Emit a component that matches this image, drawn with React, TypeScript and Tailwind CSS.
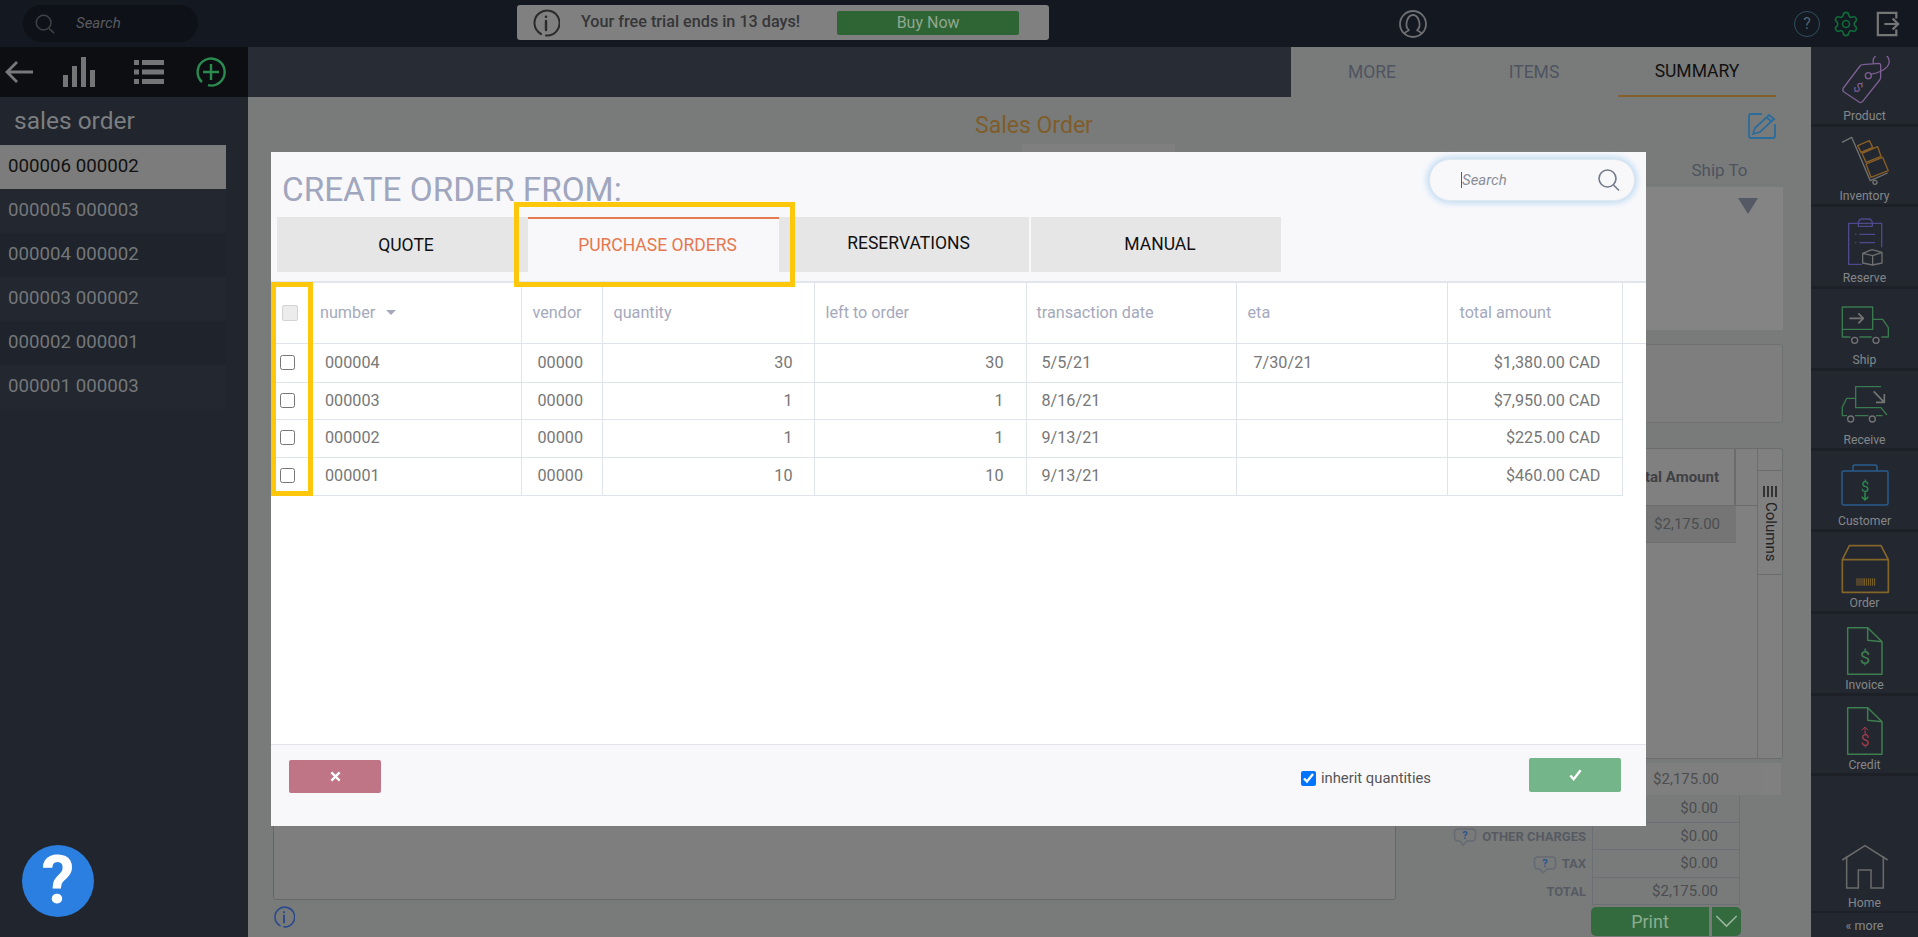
import { Settings } from 'lucide-react'

const orders = [
  { text: '000006 000002', cls: 'bg-[#7b7c7b] text-[#111111]' },
  { text: '000005 000003', cls: 'bg-[#23272f] text-[#74777a]' },
  { text: '000004 000002', cls: 'bg-[#1f232b] text-[#74777a]' },
  { text: '000003 000002', cls: 'bg-[#23272f] text-[#74777a]' },
  { text: '000002 000001', cls: 'bg-[#1f232b] text-[#74777a]' },
  { text: '000001 000003', cls: 'bg-[#23272f] text-[#74777a]' },
]

const purchaseRows = [
  { h: 'h-[39px]', number: '000004', qty: '30', left: '30', date: '5/5/21', eta: '7/30/21', total: '$1,380.00 CAD' },
  { h: 'h-[37px]', number: '000003', qty: '1', left: '1', date: '8/16/21', eta: '', total: '$7,950.00 CAD' },
  { h: 'h-[38px]', number: '000002', qty: '1', left: '1', date: '9/13/21', eta: '', total: '$225.00 CAD' },
  { h: 'h-[38px]', number: '000001', qty: '10', left: '10', date: '9/13/21', eta: '', total: '$460.00 CAD' },
]

function ProductIcon() {
  return (
    <svg viewBox="0 0 150 156" className="w-[50px] h-[52px]" fill="none" strokeWidth="4" strokeLinejoin="round">
      <path d="M10 96 L60 30 Q63 26 68 26 L116 22 Q122 22 122 28 L122 64 Q122 68 119 72 L68 136 Q63 142 57 138 L12 108 Q6 103 10 96 Z" stroke="#7d5f93" />
      <circle cx="85" cy="59" r="9" stroke="#7d5f93" />
      <path d="M90 55 Q125 50 142 32 A24 24 0 1 0 100 22" stroke="#7d5f93" />
      <text x="55" y="108" fontSize="40" fill="#7d5f93" fontFamily="Roboto" textAnchor="middle" transform="rotate(40 55 94)">$</text>
    </svg>
  )
}

function InventoryIcon() {
  return (
    <svg viewBox="0 0 150 156" className="w-[50px] h-[52px]" fill="none" strokeWidth="4" strokeLinejoin="round">
      <path d="M6 19 L35 4 L91 134 L143 111" stroke="#737373" />
      <circle cx="105" cy="139" r="6" stroke="#737373" />
      <path d="M53 29 L88 14 L98 34 L63 49 Z M66 52 L113 32 L123 61 L78 79 Z M78 84 L128 64 L145 104 L93 124 Z" stroke="#8a5f25" />
    </svg>
  )
}

function ReserveIcon() {
  return (
    <svg viewBox="0 0 150 156" className="w-[50px] h-[52px]" fill="none" strokeWidth="4" strokeLinejoin="round">
      <path d="M66 139 H26 V16 H55 Q56 3 66 3 H86 Q96 3 97 16 H125 V88" stroke="#4c4a8c" />
      <path d="M55 16 H97 V25 H55 Z" stroke="#4c4a8c" />
      <path d="M45 49 H49 M58 49 H105 M45 74 H49 M58 74 H105" stroke="#4c4a8c" />
      <path d="M68 106 L96 95 L126 103 V135 L98 141 L68 135 Z M68 106 L98 113 L126 103 M98 113 V141" stroke="#6e6e6e" />
    </svg>
  )
}

function ShipIcon() {
  return (
    <svg viewBox="0 0 150 156" className="w-[50px] h-[52px]" fill="none" strokeWidth="4" strokeLinejoin="round">
      <path d="M7 21 H98 V88 H7 Z M98 58 H128 L145 83 V111 H124 M7 88 V111 H31 M58 111 H95" stroke="#3a7a4e" />
      <circle cx="44" cy="121" r="9" stroke="#747474" />
      <circle cx="108" cy="121" r="9" stroke="#747474" />
      <path d="M28 55 H70 M55 40 L70 55 L55 70" stroke="#747474" strokeWidth="5" />
    </svg>
  )
}

function ReceiveIcon() {
  return (
    <svg viewBox="0 0 150 156" className="w-[50px] h-[52px]" fill="none" strokeWidth="4" strokeLinejoin="round">
      <path d="M123 20 H47 V83 H123 L141 105 M47 55 H20 L7 82 V107 H21 M45 107 H85 M108 107 H128" stroke="#3a7a4e" />
      <circle cx="32" cy="117" r="9" stroke="#747474" />
      <circle cx="97" cy="117" r="9" stroke="#747474" />
      <path d="M101 34 L133 67 M133 42 V67 H108" stroke="#747474" strokeWidth="5" />
    </svg>
  )
}

function CustomerIcon() {
  return (
    <svg viewBox="0 0 150 156" className="w-[50px] h-[52px]" fill="none" strokeWidth="4.5" strokeLinejoin="round">
      <rect x="6" y="30" width="138" height="102" rx="5" stroke="#2a5e8e" />
      <path d="M39 30 V18 Q39 12 45 12 H105 Q111 12 111 18 V30" stroke="#2a5e8e" />
      <text x="75" y="94" fontSize="44" fill="#2b8a4f" fontFamily="Roboto" textAnchor="middle">$</text>
      <path d="M75 96 V116 M65 107 L75 117 L85 107" stroke="#2b8a4f" />
    </svg>
  )
}

function OrderIcon() {
  return (
    <svg viewBox="0 0 150 156" className="w-[50px] h-[52px]" fill="none" strokeWidth="5" strokeLinejoin="round">
      <path d="M7 50 L28 8 H123 L145 50 V148 H7 Z M7 50 H145" stroke="#84652a" />
      <path d="M51 128 V106 M57 128 V106 M63 128 V106 M69 128 V106 M74 128 V106 M80 128 V106 M86 128 V106 M92 128 V106 M98 128 V106 M104 128 V106" stroke="#84652a" strokeWidth="3" />
    </svg>
  )
}

function DocIcon({ children }: { children: React.ReactNode }) {
  return (
    <svg viewBox="0 0 150 156" className="w-[50px] h-[52px]" fill="none" strokeWidth="4.5" strokeLinejoin="round">
      <path d="M23 8 H83 L126 50 V148 H23 Z M83 8 V46 L126 50" stroke="#3e7f50" />
      {children}
    </svg>
  )
}

function HomeIcon() {
  return (
    <svg viewBox="0 0 150 156" className="w-[50px] h-[52px]" fill="none" strokeWidth="4.5" strokeLinejoin="miter">
      <path d="M7 51 L75 8 L143 51" stroke="#6b6b6b" />
      <path d="M20 40 V135 H55 V81 H93 V135 H130 V40" stroke="#6b6b6b" />
    </svg>
  )
}

const navItems = [
  { label: 'Product', h: 'h-[80px]', icon: <ProductIcon /> },
  { label: 'Inventory', h: 'h-[80px]', icon: <InventoryIcon /> },
  { label: 'Reserve', h: 'h-[82px]', icon: <ReserveIcon /> },
  { label: 'Ship', h: 'h-[82px]', icon: <ShipIcon /> },
  { label: 'Receive', h: 'h-[80px]', icon: <ReceiveIcon /> },
  { label: 'Customer', h: 'h-[81px]', icon: <CustomerIcon /> },
  { label: 'Order', h: 'h-[82px]', icon: <OrderIcon /> },
  {
    label: 'Invoice',
    h: 'h-[82px]',
    icon: (
      <DocIcon>
        <text x="75" y="116" fontSize="56" fill="#3e7f50" fontFamily="Roboto" textAnchor="middle">$</text>
      </DocIcon>
    ),
  },
  {
    label: 'Credit',
    h: 'h-[80px]',
    icon: (
      <DocIcon>
        <text x="75" y="124" fontSize="48" fill="#9c3b4b" fontFamily="Roboto" textAnchor="middle">$</text>
        <path d="M75 84 V66 M65 76 L75 66 L85 76" stroke="#9c3b4b" strokeWidth="3" />
      </DocIcon>
    ),
  },
]

function InfoRing({ className, color }: { className: string; color: string }) {
  return (
    <svg viewBox="0 0 28 28" className={className} fill="none" stroke={color} strokeWidth="2" strokeLinecap="round">
      <path d="M9 25 A12.5 12.5 0 1 1 14 26.5" />
      <path d="M14 12 V21" strokeWidth="2.4" />
      <circle cx="14" cy="7.8" r="1.3" fill={color} stroke="none" />
    </svg>
  )
}

function BubbleHelp() {
  return (
    <svg viewBox="0 0 24 22" className="w-[24px] h-[22px]" fill="none" stroke="#666a72" strokeWidth="1.6">
      <path d="M5 2 H19 Q22.5 2 22.5 5.5 V10 Q22.5 14 19 14 H14 L10 18 L7 14 H5 Q1.5 14 1.5 10 V5.5 Q1.5 2 5 2 Z" />
      <text x="12" y="12" fontSize="11" fontWeight="700" fill="#2a5590" stroke="none" textAnchor="middle" fontFamily="Roboto">?</text>
    </svg>
  )
}

function TotalRow({ label, value, bubble, h }: { label: string; value: string; bubble?: boolean; h: string }) {
  return (
    <div className={`flex justify-end items-center ${h}`}>
      {bubble && <div className="mr-[5px] mt-[3px]"><BubbleHelp /></div>}
      <span className="text-[13px] font-bold text-[#565a63] mr-[6px]">{label}</span>
      <div className="w-[148px] h-full border border-t-0 border-[#6c6f73] text-right pr-[21px] text-[15px] leading-[27px] text-[#4b4d50]">
        {value}
      </div>
    </div>
  )
}

export default function App() {
  return (
    <div className="relative h-[937px] w-full overflow-hidden flex flex-col bg-[#797b7a] font-['Roboto',sans-serif]">
      {/* top bar */}
      <div className="h-[47px] shrink-0 flex items-start bg-[#141821]">
        <div className="mt-[5px] ml-[23px] w-[175px] h-[37px] rounded-full bg-[#0e1117] flex items-center pl-[11px]">
          <svg viewBox="0 0 24 24" className="w-[22px] h-[22px]" fill="none" stroke="#3f4247" strokeWidth="1.6">
            <circle cx="10.5" cy="10.5" r="8" />
            <path d="M16.5 17 L22 22" />
          </svg>
          <span className="ml-[20px] text-[15px] italic text-[#5a5c60]">Search</span>
        </div>
        <div className="mt-[5px] ml-[319px] w-[532px] h-[35px] rounded-[3px] bg-[#808080] flex items-center pl-[15px]">
          <InfoRing className="w-[28px] h-[28px]" color="#2b2b2b" />
          <span className="ml-[21px] text-[16.2px] font-medium text-[#353638] whitespace-nowrap">Your free trial ends in 13 days!</span>
          <div className="ml-[37px] w-[182px] h-[24px] rounded-[2px] bg-[#2f6535] flex items-center justify-center text-[16px] text-[#8fa78f]">
            Buy Now
          </div>
        </div>
        <div className="mt-[10px] ml-[350px]">
          <svg viewBox="0 0 28 28" className="w-[28px] h-[28px]" fill="none" stroke="#6e6f72" strokeWidth="1.8">
            <circle cx="14" cy="14" r="13" />
            <path d="M10 20 C5 17 8 5 14 5 C20 5 23 17 18 20 M5 24 C7 21 9 21 10.5 20 M23 24 C21 21 19 21 17.5 20" />
          </svg>
        </div>
        <div className="ml-auto mr-[18px] mt-[10px] flex items-center gap-[12px]">
          <div className="w-[26px] h-[26px] rounded-full border border-[#2d5060] flex items-center justify-center text-[16px] text-[#4d6470]">?</div>
          <Settings className="w-[28px] h-[28px] text-[#0f6a3a]" strokeWidth={1.4} />
          <svg viewBox="0 0 26 28" className="w-[24px] h-[28px] ml-[4px]" fill="none" stroke="#767676" strokeWidth="2.4">
            <path d="M22 8 V2 H2 V26 H22 V20" />
            <path d="M9 14 H24 M18 8 L24 14 L18 20" />
          </svg>
        </div>
      </div>

      <div className="flex-1 flex min-h-0">
        {/* orders list */}
        <div className="w-[248px] shrink-0 bg-[#21252d] flex flex-col">
          <div className="h-[50px] bg-[#0c0e12] flex items-center">
            <svg viewBox="0 0 30 26" className="w-[30px] h-[26px] ml-[4px]" fill="none" stroke="#77797b" strokeWidth="2.8">
              <path d="M29 13 H3 M13 3 L3 13 L13 23" />
            </svg>
            <svg viewBox="0 0 32 30" className="w-[32px] h-[30px] ml-[29px]" fill="#747576">
              <rect x="0" y="18" width="5" height="12" />
              <rect x="9" y="9" width="5" height="21" />
              <rect x="18" y="0" width="5" height="30" />
              <rect x="27" y="13" width="5" height="17" />
            </svg>
            <svg viewBox="0 0 30 24" className="w-[30px] h-[24px] ml-[39px]" fill="#747576">
              <rect x="0" y="0" width="5" height="5" />
              <rect x="8" y="0" width="22" height="5" />
              <rect x="0" y="9.5" width="5" height="5" />
              <rect x="8" y="9.5" width="22" height="5" />
              <rect x="0" y="19" width="5" height="5" />
              <rect x="8" y="19" width="22" height="5" />
            </svg>
            <svg viewBox="0 0 30 30" className="w-[30px] h-[30px] ml-[32px]" fill="none" stroke="#2a8a4f" strokeWidth="2.4">
              <path d="M6 25 A13.5 13.5 0 1 1 12 28.2" />
              <path d="M15 7 V23 M7 15 H23" />
            </svg>
          </div>
          <div className="h-[48px] pl-[14px] text-[24.5px] leading-[48px] text-[#7b7e80]">sales order</div>
          <div className="w-[226px] flex flex-col">
            {orders.map((o) => (
              <div key={o.text} className={`h-[44px] pl-[8px] text-[18.7px] leading-[43px] ${o.cls}`}>
                {o.text}
              </div>
            ))}
          </div>
        </div>

        {/* document behind the dialog */}
        <div className="flex-1 flex flex-col min-w-0">
          <div className="h-[50px] shrink-0 flex">
            <div className="flex-1 bg-[#282c35]" />
            <div className="w-[520px] flex text-[17.5px] pr-[34px]">
              <div className="w-[162px] h-[50px] flex items-center justify-center text-[#4f5460]">MORE</div>
              <div className="w-[162px] h-[50px] flex items-center justify-center text-[#4f5460]">ITEMS</div>
              <div className="w-[158px] ml-[3px] h-[50px] flex items-center justify-center text-[#111111] border-b-2 border-[#84602a]">SUMMARY</div>
            </div>
          </div>

          <div className="flex-1 pl-[25px] pr-[28px] flex flex-col min-h-0">
            <div className="h-[47px] shrink-0 flex items-start">
              <span className="ml-[702px] mt-[13px] text-[23px] leading-[32px] text-[#7f5d2a]">Sales Order</span>
              <svg viewBox="0 0 28 26" className="ml-auto mr-[7px] mt-[16px] w-[28px] h-[26px]" fill="none" stroke="#2a6c9c" strokeWidth="1.8">
                <path d="M14 1 H3 Q1 1 1 3 V23 Q1 25 3 25 H25 Q27 25 27 23 V11" />
                <path d="M5 21 L7 15 L21 2 L26 6 L12 19 Z M18.5 4.5 L23.5 8.5" />
              </svg>
            </div>

            <div className="h-[186px] shrink-0 flex">
              <div className="ml-[749px] w-[153px] h-[8px] bg-[#7f7f7f]" />
              <div className="ml-auto w-[137px] flex flex-col">
                <div className="h-[43px] flex items-center justify-center pl-[10px] pt-[10px] text-[17px] text-[#4d535f]">Ship To</div>
                <div className="h-[143px] bg-[#848484] flex justify-end pr-[25px] pt-[11px]">
                  <div className="w-0 h-0 border-l-[10px] border-r-[10px] border-t-[16px] border-l-transparent border-r-transparent border-t-[#545965]" />
                </div>
              </div>
            </div>

            <div className="mt-[14px] ml-auto w-[383px] h-[79px] shrink-0 rounded-[3px] border border-[#6f7173] bg-[#7e7e7e]" />

            <div className="mt-[25px] h-[311px] shrink-0 flex rounded-[3px] border border-[#6a6c6e] bg-[#808080]">
              <div className="flex-1 flex flex-col">
                <div className="h-[57px] border-b border-[#6a6c6e] flex justify-end items-center pr-[21px] text-[15px] font-bold text-[#3f4145]">
                  <div className="h-full flex items-center border-r-2 border-[#6a6c6e] pr-[15px]">Total Amount</div>
                </div>
                <div className="h-[37px] mr-[21px] bg-[#757575] border-b border-[#6e6e6e] text-right pr-[16px] text-[15px] leading-[36px] text-[#4b4d50]">
                  $2,175.00
                </div>
              </div>
              <div className="w-[25px] border-l border-[#6a6c6e] flex flex-col">
                <div className="h-[21px]" />
                <div className="h-[105px] border-y border-[#6a6c6e] flex flex-col items-center pt-[15px] gap-[5px]">
                  <div className="flex gap-[2.5px]">
                    <div className="w-[1.5px] h-[11px] bg-[#333333]" />
                    <div className="w-[1.5px] h-[11px] bg-[#333333]" />
                    <div className="w-[1.5px] h-[11px] bg-[#333333]" />
                    <div className="w-[1.5px] h-[11px] bg-[#333333]" />
                  </div>
                  <span className="text-[15px] leading-none text-[#222222] [writing-mode:vertical-rl]">Columns</span>
                </div>
              </div>
            </div>

            <div className="mt-[4px] h-[32px] shrink-0 flex bg-[#7f7f7f] mr-[2px]">
              <div className="flex-1 text-right pr-[42px] text-[15px] leading-[32px] text-[#4b4d50]">$2,175.00</div>
              <div className="w-[20px] bg-[#808080]" />
            </div>

            <div className="flex flex-1 min-h-0">
              <div className="w-[1123px] flex flex-col">
                <div className="mt-[6px] h-[99px] rounded-b-[3px] border border-[#666666] bg-[#7e7e7e]" />
                <InfoRing className="mt-[6px] w-[22px] h-[22px]" color="#2a4a8c" />
              </div>
              <div className="ml-auto mr-[43px] flex flex-col">
                <TotalRow label="" value="$0.00" h="h-[28px]" />
                <TotalRow label="OTHER CHARGES" value="$0.00" bubble h="h-[27px]" />
                <TotalRow label="TAX" value="$0.00" bubble h="h-[28px]" />
                <TotalRow label="TOTAL" value="$2,175.00" h="h-[27px]" />
                <div className="mt-[2px] flex justify-end gap-[3px]">
                  <div className="w-[118px] h-[29px] rounded-l-[5px] bg-[#336b3f] text-center text-[18px] leading-[29px] text-[#8cae90]">Print</div>
                  <div className="w-[29px] h-[29px] -mr-px rounded-r-[5px] bg-[#336b3f] flex items-center justify-center">
                    <svg viewBox="0 0 24 14" className="w-[23px] h-[13px]" fill="none" stroke="#9cb8a0" strokeWidth="1.6">
                      <path d="M1 1 L12 12 L23 1" />
                    </svg>
                  </div>
                </div>
              </div>
            </div>
          </div>
        </div>

        {/* module rail */}
        <div className="w-[107px] shrink-0 bg-[#23272f] flex flex-col">
          {navItems.map((n) => (
            <div key={n.label} className={`${n.h} flex flex-col items-center justify-end border-b-[3px] border-[#1d2027]`}>
              {n.icon}
              <span className="text-[12.2px] leading-[16px] text-[#84878a]">{n.label}</span>
            </div>
          ))}
          <div className="mt-auto flex flex-col items-center border-b-[2px] border-[#1d2027]">
            <HomeIcon />
            <span className="text-[12.2px] leading-[16px] text-[#84878a]">Home</span>
          </div>
          <div className="h-[24px] flex items-center justify-center pt-[3px] text-[12.5px] text-[#84878a]">« more</div>
        </div>
      </div>

      {/* help bubble */}
      <div className="absolute left-[22px] top-[845px] w-[72px] h-[72px] rounded-full bg-[#2a7fe0] flex items-center justify-center text-[66px] font-bold leading-none text-white">
        ?
      </div>

      {/* create order dialog */}
      <div className="absolute left-[271px] top-[152px] w-[1375px] h-[674px] bg-[#f8f8fb] flex flex-col">
        <div className="h-[65px] shrink-0 flex items-start px-[11px]">
          <h1 className="mt-[18px] text-[33.3px] leading-[40px] text-[#a0a6bd]">CREATE ORDER FROM:</h1>
          <div className="ml-auto mt-[7px] w-[206px] h-[42px] rounded-full bg-[#f8f8fb] border border-[#e2e8f0] shadow-[0_0_6px_2px_#bcd9f2] flex items-center pl-[31px] pr-[13px]">
            <span className="w-px h-[16px] bg-[#555b70]" />
            <span className="text-[15px] italic text-[#8b8f99]">Search</span>
            <svg viewBox="0 0 24 24" className="ml-auto w-[24px] h-[24px]" fill="none" stroke="#727a8a" strokeWidth="1.6">
              <circle cx="10.5" cy="10.5" r="8.5" />
              <path d="M16.5 17 L22 22.5" />
            </svg>
          </div>
        </div>

        <div className="h-[55px] shrink-0 flex pl-[6px] text-[17.5px] text-[#111111]">
          <div className="w-[251px] bg-[#e6e6e6] flex items-center justify-center pl-[7px] pt-[2px]">QUOTE</div>
          <div className="w-[251px] border-t-2 border-[#e57a50] flex items-center justify-center pl-[8px] text-[#e5784e]">PURCHASE ORDERS</div>
          <div className="w-[250px] bg-[#e6e6e6] flex items-center justify-center pl-[9px] pb-[3px]">RESERVATIONS</div>
          <div className="ml-[2px] w-[250px] bg-[#e6e6e6] flex items-center justify-center pl-[8px]">MANUAL</div>
        </div>

        <div className="mt-[9px] flex-1 bg-white border-t-2 border-[#e2e5ec] min-h-0">
          <table className="table-fixed border-collapse w-[1375px] text-[16.2px]">
            <colgroup>
              <col className="w-[250px]" />
              <col className="w-[81px]" />
              <col className="w-[212px]" />
              <col className="w-[212px]" />
              <col className="w-[210px]" />
              <col className="w-[211px]" />
              <col className="w-[175px]" />
              <col />
            </colgroup>
            <thead>
              <tr className="h-[60px] text-[#a5a9bd] border-b border-[#dfe3ea]">
                <th className="font-normal text-left border-r border-[#dfe3ea]">
                  <div className="flex items-center">
                    <input type="checkbox" disabled className="appearance-none ml-[11px] w-[16px] h-[16px] rounded-[2px] bg-[#ececec] border border-[#d3d3d3]" />
                    <span className="ml-[22px]">number</span>
                    <span className="ml-[11px] w-0 h-0 border-l-[5px] border-r-[5px] border-t-[5px] border-l-transparent border-r-transparent border-t-[#a5a9bd]" />
                  </div>
                </th>
                <th className="font-normal text-left pl-[11px] border-r border-[#dfe3ea]">vendor</th>
                <th className="font-normal text-left pl-[11px] border-r border-[#dfe3ea]">quantity</th>
                <th className="font-normal text-left pl-[11px] border-r border-[#dfe3ea]">left to order</th>
                <th className="font-normal text-left pl-[10px] border-r border-[#dfe3ea]">transaction date</th>
                <th className="font-normal text-left pl-[11px] border-r border-[#dfe3ea]">eta</th>
                <th className="font-normal text-left pl-[12px] border-r border-[#dfe3ea]">total amount</th>
                <th />
              </tr>
            </thead>
            <tbody className="text-[#777777]">
              {purchaseRows.map((r) => (
                <tr key={r.number} className={r.h}>
                  <td className="border-r border-b border-[#dfe3ea]">
                    <div className="flex items-center">
                      <input type="checkbox" className="ml-[9px] w-[15px] h-[15px]" />
                      <span className="ml-[30px] mt-px">{r.number}</span>
                    </div>
                  </td>
                  <td className="pl-[16px] pt-px border-r border-b border-[#dfe3ea]">00000</td>
                  <td className="text-right pr-[21px] pt-px border-r border-b border-[#dfe3ea]">{r.qty}</td>
                  <td className="text-right pr-[22px] pt-px border-r border-b border-[#dfe3ea]">{r.left}</td>
                  <td className="pl-[15px] pt-px border-r border-b border-[#dfe3ea]">{r.date}</td>
                  <td className="pl-[17px] pt-px border-r border-b border-[#dfe3ea]">{r.eta}</td>
                  <td className="text-right pr-[21px] pt-px border-r border-b border-[#dfe3ea]">{r.total}</td>
                  <td />
                </tr>
              ))}
            </tbody>
          </table>
        </div>

        <div className="h-[82px] shrink-0 border-t border-[#e2e4ec] flex items-start pl-[18px] pr-[25px]">
          <button className="mt-[15px] w-[92px] h-[33px] rounded-[2px] bg-[#bf7585] flex items-center justify-center">
            <svg viewBox="0 0 12 12" className="w-[11px] h-[11px]" fill="none" stroke="white" strokeWidth="2.6">
              <path d="M1.5 1.5 L10.5 10.5 M10.5 1.5 L1.5 10.5" />
            </svg>
          </button>
          <label className="ml-auto mt-[24px] flex items-center text-[14.8px] leading-[18px] text-[#555555]">
            <input type="checkbox" defaultChecked className="w-[15px] h-[15px]" />
            <span className="ml-[5px]">inherit quantities</span>
          </label>
          <button className="ml-[98px] mt-[13px] w-[92px] h-[34px] rounded-[2px] bg-[#75b58a] flex items-center justify-center">
            <svg viewBox="0 0 14 12" className="w-[13px] h-[12px]" fill="none" stroke="white" strokeWidth="2.6">
              <path d="M1.5 6.5 L5 10.5 L12.5 1" />
            </svg>
          </button>
        </div>

        {/* annotation boxes */}
        <div className="absolute left-[243px] top-[50px] w-[281px] h-[85px] border-[5px] border-[#fdc70c]" />
        <div className="absolute left-0 top-[130px] w-[42px] h-[214px] border-[5px] border-[#fdc70c]" />
      </div>
    </div>
  )
}
